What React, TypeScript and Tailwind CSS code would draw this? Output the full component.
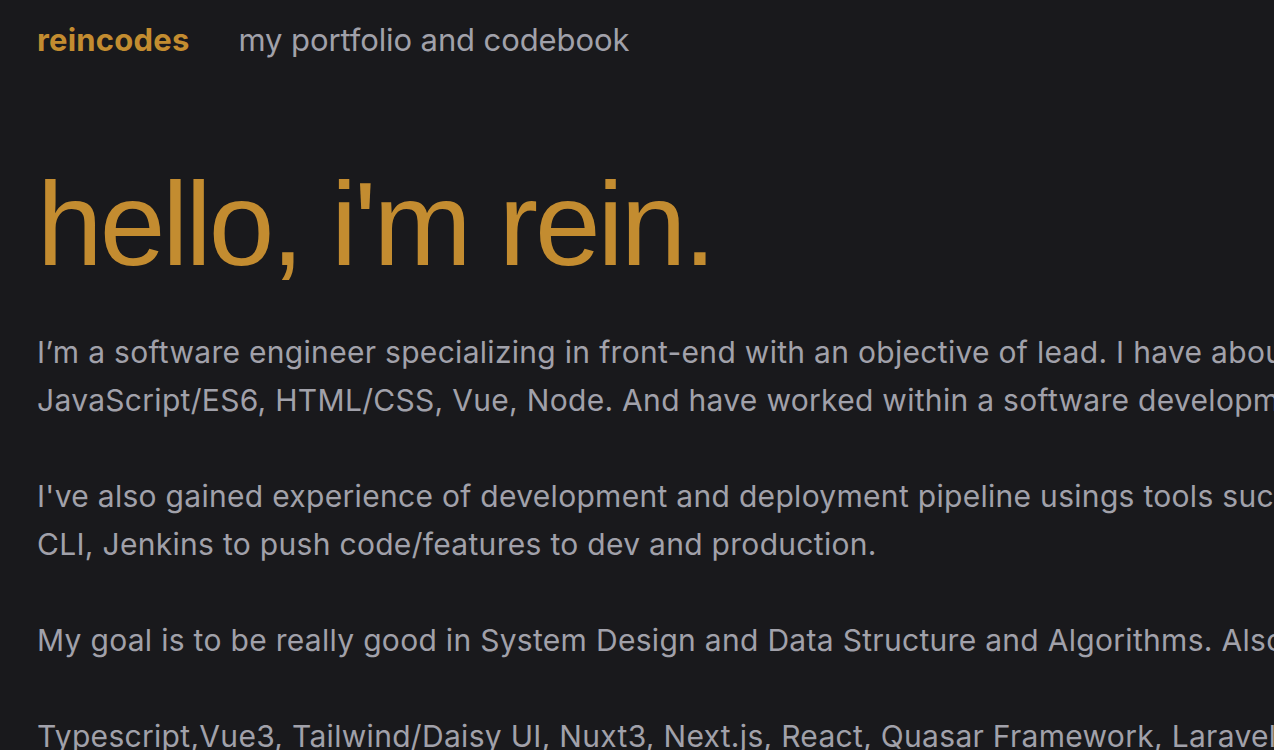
import React from "react";

export default function App() {
  return (
    <div className="h-[750px] w-full overflow-hidden bg-[#19191c]">
      <div className="w-[1700px] whitespace-nowrap px-[37px]">
        <header className="flex items-baseline gap-[49px] pt-[17px]">
          <span className="font-['Inter',sans-serif] text-[31px] font-bold tracking-[0.2px] text-[#c38c30]">reincodes</span>
          <span className="font-['Inter',sans-serif] text-[31px] tracking-[-0.1px] text-[#a1a1aa]">my portfolio and codebook</span>
        </header>
        <h1 className="mt-[101px] font-['Liberation_Sans',Arial,sans-serif] text-[118px] leading-none tracking-[-3px] text-[#c38c30]">
          hello, i'm rein.
        </h1>
        <div className="mt-[45px] font-['Inter',sans-serif] text-[30px] leading-[48px] tracking-[0.3px] text-[#a1a1aa]">
          <p>
            I’m a software engineer specializing in front-end with an objective of lead. I have about 5 years of experience with
            <br />
            JavaScript/ES6, HTML/CSS, Vue, Node. And have worked within a software development team.
          </p>
          <br />
          <p>
            I've also gained experience of development and deployment pipeline usings tools such as Git, Docker, AWS
            <br />
            CLI, Jenkins to push code/features to dev and production.
          </p>
          <br />
          <p>My goal is to be really good in System Design and Data Structure and Algorithms. Also learning new things.</p>
          <br />
          <p>Typescript,Vue3, Tailwind/Daisy UI, Nuxt3, Next.js, React, Quasar Framework, Laravel, PHP</p>
        </div>
      </div>
    </div>
  );
}
